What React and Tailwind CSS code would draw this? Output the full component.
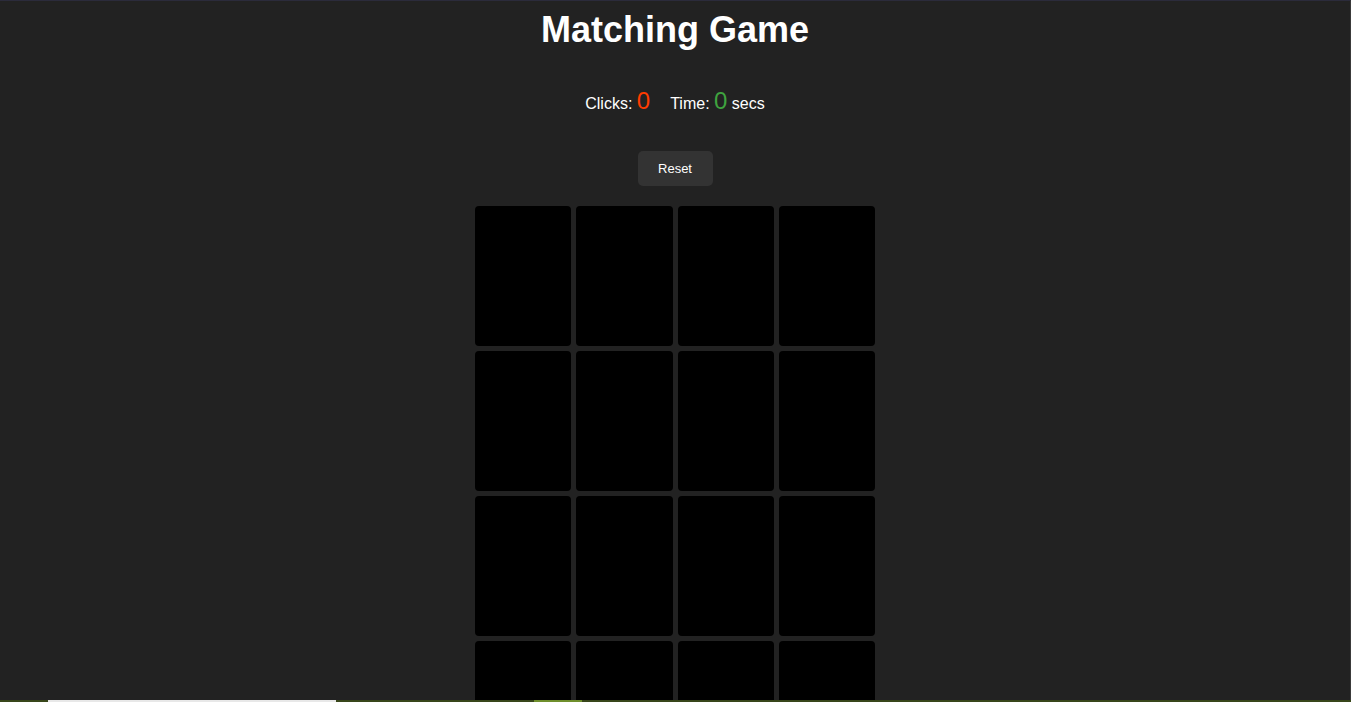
import React, { useState } from 'react';

const CARD_COUNT = 16;

const Card = () => (
    <div className="h-[140px] rounded-[4px] bg-black"></div>
);

const App = () => {
    const [clicks] = useState(0);
    const [seconds] = useState(0);

    return (
        <div
            className="min-h-screen bg-[#222222] border-t border-t-[#2b2b3b] border-r border-r-[#3a3a3a] text-white"
            style={{ fontFamily: '"Liberation Sans", Arial, sans-serif' }}
        >
            <h1 className="pt-[8px] text-center text-[36px] font-bold leading-[42px]">Matching Game</h1>

            {/* score line */}
            <div className="mt-[36px] flex items-baseline justify-center text-[16px] leading-[28px]">
                <span>
                    Clicks: <span className="text-[24px] text-[#ff3c00]">{clicks}</span>
                </span>
                <span className="ml-[20px]">
                    Time: <span className="text-[24px] text-[#3fa33f]">{seconds}</span> secs
                </span>
            </div>

            <div className="mt-[33px] flex justify-center">
                <button className="h-[35px] w-[75px] rounded-[5px] bg-[#333333] text-[13px] text-white">
                    Reset
                </button>
            </div>

            {/* card board */}
            <div className="mx-auto mt-[20px] grid w-[400px] grid-cols-4 gap-[5px]">
                {Array.from({ length: CARD_COUNT }).map((_, i) => (
                    <Card key={i} />
                ))}
            </div>

            {/* progress strip along the bottom edge */}
            <div className="fixed bottom-0 left-0 right-0 flex h-[2px] bg-[#38461a]">
                <div className="ml-[48px] w-[288px] bg-[#e8e8e8]"></div>
                <div className="ml-[198px] w-[48px] bg-[#6f8f2c]"></div>
            </div>
        </div>
    );
};

export default App;
